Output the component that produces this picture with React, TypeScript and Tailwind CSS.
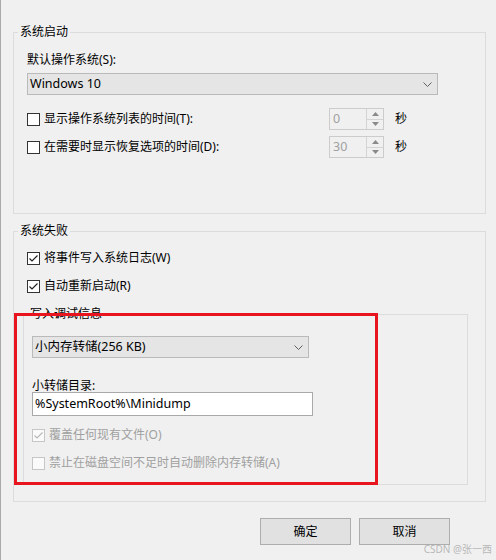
import React from "react";

function Check({ checked, disabled, label }: { checked?: boolean; disabled?: boolean; label: string }) {
  return (
    <div className="flex items-center h-[16px]">
      <span
        className={
          disabled
            ? "w-[13px] h-[13px] border border-[#c6c6c6] bg-[#fafafa] flex items-center justify-center"
            : "w-[13px] h-[13px] border border-[#333333] bg-white flex items-center justify-center"
        }
      >
        {checked && (
          <svg width="11" height="11" viewBox="0 0 11 11">
            <path d="M1.5 5.5 L4 8 L9.5 2.5" fill="none" stroke={disabled ? "#b8b8b8" : "#222222"} strokeWidth="1.2" />
          </svg>
        )}
      </span>
      <span className={disabled ? "ml-[4px] text-[#a0a0a0] leading-[16px]" : "ml-[4px] text-black leading-[16px]"}>{label}</span>
    </div>
  );
}

function Chevron() {
  return (
    <svg width="9" height="5" viewBox="0 0 9 5">
      <path d="M0.5 0.5 L4.5 4.5 L8.5 0.5" fill="none" stroke="#606060" strokeWidth="1" />
    </svg>
  );
}

function Combo({ text, w }: { text: string; w: string }) {
  return (
    <div className={`${w} h-[22px] bg-[#e5e5e5] border border-[#bababa] flex items-center pl-[2px] pr-[5px]`}>
      <span className="flex-1 leading-[20px] text-[12.5px]">{text}</span>
      <Chevron />
    </div>
  );
}

function Spinner({ value }: { value: string }) {
  return (
    <div className="w-[55px] h-[22px] border border-[#cccccc] flex bg-[#f0f0f0]">
      <span className="flex-1 pl-[3px] text-[#a0a0a0] leading-[20px] text-[12.5px]">{value}</span>
      <div className="w-[17px] flex flex-col border-l border-[#d4d4d4]">
        <div className="flex-1 flex items-center justify-center border-b border-[#d4d4d4]">
          <svg width="7" height="4" viewBox="0 0 7 4">
            <path d="M0 4 L3.5 0 L7 4 Z" fill="#8a8a8a" />
          </svg>
        </div>
        <div className="flex-1 flex items-center justify-center">
          <svg width="7" height="4" viewBox="0 0 7 4">
            <path d="M0 0 L3.5 4 L7 0 Z" fill="#8a8a8a" />
          </svg>
        </div>
      </div>
    </div>
  );
}

export default function App() {
  return (
    <div className="relative w-[496px] h-[560px] bg-[#f0f0f0] border-l border-[#aaaaaa] pl-[12px] pt-[24px] text-[12px] text-black font-[family-name:'Noto_Sans','Noto_Sans_CJK_SC',sans-serif] overflow-hidden">
      <fieldset className="w-[473px] border border-[#dcdcdc] p-0 m-0">
        <legend className="ml-[4px] px-[2px] leading-[16px]">系统启动</legend>
        <div className="pl-[13px] pt-[12px] pb-[55px]">
          <div className="leading-[16px]">默认操作系统(S):</div>
          <div className="mt-[5px]">
            <Combo text="Windows 10" w="w-[411px]" />
          </div>
          <div className="mt-[13px] flex items-center h-[22px]">
            <div className="w-[302px]">
              <Check label="显示操作系统列表的时间(T):" />
            </div>
            <Spinner value="0" />
            <span className="ml-[11px]">秒</span>
          </div>
          <div className="mt-[6px] flex items-center h-[22px]">
            <div className="w-[302px]">
              <Check label="在需要时显示恢复选项的时间(D):" />
            </div>
            <Spinner value="30" />
            <span className="ml-[11px]">秒</span>
          </div>
        </div>
      </fieldset>

      <fieldset className="mt-[9px] w-[473px] border border-[#dcdcdc] p-0 m-0">
        <legend className="ml-[4px] px-[2px] leading-[16px]">系统失败</legend>
        <div className="pl-[9px] pt-[11px] pb-[16px]">
          <div className="pl-[4px]">
            <Check checked label="将事件写入系统日志(W)" />
            <div className="mt-[12px]">
              <Check checked label="自动重新启动(R)" />
            </div>
          </div>
          <fieldset className="mt-[12px] w-[445px] border border-[#dcdcdc] p-0 m-0">
            <legend className="ml-[4px] px-[2px] leading-[16px]">写入调试信息</legend>
            <div className="pl-[8px] pt-[14px] pb-[13px]">
              <Combo text="小内存转储(256 KB)" w="w-[277px]" />
              <div className="mt-[21px] h-[13px] leading-[13px]">小转储目录:</div>
              <div className="w-[281px] h-[24px] bg-white border border-[#a9a9a9] pl-[2px] leading-[22px] text-[12.5px]">
                %SystemRoot%\Minidump
              </div>
              <div className="mt-[11px]">
                <Check checked disabled label="覆盖任何现有文件(O)" />
              </div>
              <div className="mt-[12px]">
                <Check disabled label="禁止在磁盘空间不足时自动删除内存转储(A)" />
              </div>
            </div>
          </fieldset>
        </div>
      </fieldset>

      <div className="mt-[16px] flex justify-end gap-[8px] pr-[46px]">
        <button className="w-[91px] h-[27px] bg-[#e1e1e1] border border-[#adadad] text-[12px]">确定</button>
        <button className="w-[91px] h-[27px] bg-[#e1e1e1] border border-[#adadad] text-[12px]">取消</button>
      </div>

      <div className="absolute left-[13px] top-[313px] w-[364px] h-[172px] border-[3px] border-[#e8151f] pointer-events-none" />

      <div className="absolute right-[4px] bottom-[5px] text-[10px] leading-[12px] text-[#b8b8b8]">CSDN @张一西</div>
    </div>
  );
}
